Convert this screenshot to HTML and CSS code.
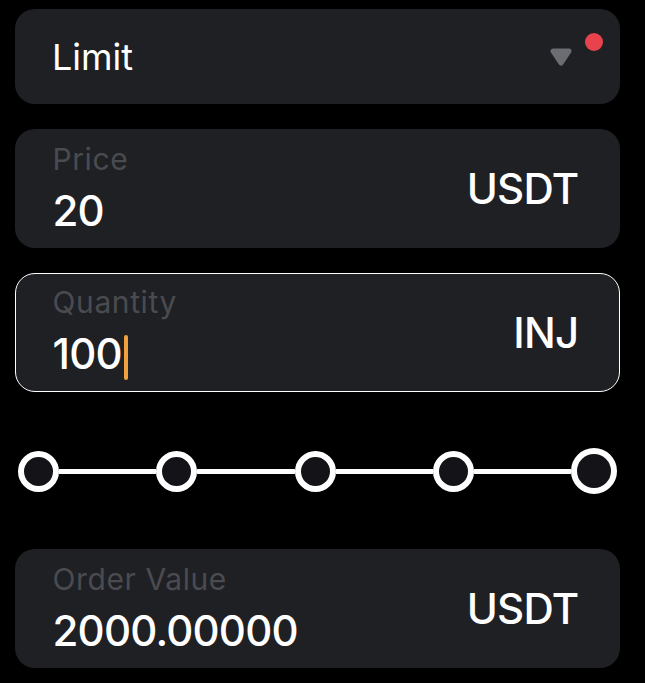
FILE: index.html
```html
<!DOCTYPE html>
<html lang="en">
<head>
    <meta charset="UTF-8">
    <meta name="viewport" content="width=device-width, initial-scale=1.0">
    <title>Order Form</title>
    <link rel="stylesheet" href="styles.css">
</head>
<body>
    <main class="order-form">
        <div class="select-box">
            <span class="select-text">Limit</span>
            <svg class="select-arrow" width="24" height="18" viewBox="0 0 24 18">
                <path d="M4 3 L20 3 L12 15 Z" fill="#6b6d72" stroke="#6b6d72" stroke-width="5" stroke-linejoin="round"/>
            </svg>
            <span class="select-dot"></span>
        </div>

        <div class="field">
            <div class="field-main">
                <span class="field-label">Price</span>
                <span class="field-value">20</span>
            </div>
            <span class="field-unit">USDT</span>
        </div>

        <div class="field field-active">
            <div class="field-main">
                <span class="field-label">Quantity</span>
                <span class="field-value">100<span class="caret"></span></span>
            </div>
            <span class="field-unit">INJ</span>
        </div>

        <div class="slider">
            <span class="slider-dot"></span>
            <span class="slider-line"></span>
            <span class="slider-dot"></span>
            <span class="slider-line"></span>
            <span class="slider-dot"></span>
            <span class="slider-line"></span>
            <span class="slider-dot"></span>
            <span class="slider-line"></span>
            <span class="slider-dot slider-dot-end"></span>
        </div>

        <div class="field">
            <div class="field-main">
                <span class="field-label">Order Value</span>
                <span class="field-value">2000.00000</span>
            </div>
            <span class="field-unit">USDT</span>
        </div>
    </main>
</body>
</html>
```

FILE: styles.css
```css
* {
    margin: 0;
    padding: 0;
    box-sizing: border-box;
}

body {
    font-family: 'Inter', 'Noto Sans', sans-serif;
    background: #000000;
    color: #ffffff;
}

.order-form {
    display: flex;
    flex-direction: column;
    gap: 25px;
    padding: 9px 25px 0 15px;
}

/* Tipo de ordem */
.select-box {
    position: relative;
    display: flex;
    align-items: center;
    height: 95px;
    padding: 0 47px 0 37px;
    background: #1f2024;
    border-radius: 20px;
}

.select-text {
    flex: 1;
    font-size: 36px;
    line-height: 44px;
}

.select-arrow {
    display: block;
}

.select-dot {
    position: absolute;
    top: 24px;
    right: 17px;
    width: 18px;
    height: 18px;
    border-radius: 50%;
    background: #e8434d;
}

/* Campos */
.field {
    display: flex;
    align-items: center;
    height: 119px;
    padding: 10.5px 41.5px 11.5px 36.5px;
    background: #1f2024;
    border: 1.5px solid transparent;
    border-radius: 20px;
}

.field-active {
    border-color: #ffffff;
}

.field-main {
    flex: 1;
    display: flex;
    flex-direction: column;
    gap: 10px;
}

.field-label {
    font-size: 30px;
    line-height: 36px;
    letter-spacing: 0.6px;
    color: #4a4b50;
}

.field-value {
    font-size: 42px;
    line-height: 48px;
    font-weight: 500;
    letter-spacing: -0.8px;
}

.field-unit {
    font-size: 42px;
    font-weight: 500;
    letter-spacing: -0.8px;
    margin-right: -0.8px;
}

.caret {
    display: inline-block;
    width: 4px;
    height: 45px;
    margin-left: 2px;
    vertical-align: -11px;
    background: #efa13f;
    border-radius: 2px;
}

/* Slider */
.slider {
    display: flex;
    align-items: center;
    height: 46px;
    margin: 31px 3px 30px 3px;
}

.slider-dot {
    width: 41px;
    height: 41px;
    border: 6px solid #ffffff;
    border-radius: 50%;
    background: #141418;
}

.slider-dot-end {
    width: 46px;
    height: 46px;
    border-width: 6.5px;
}

.slider-line {
    flex: 1;
    height: 5px;
    background: #ffffff;
}
```
